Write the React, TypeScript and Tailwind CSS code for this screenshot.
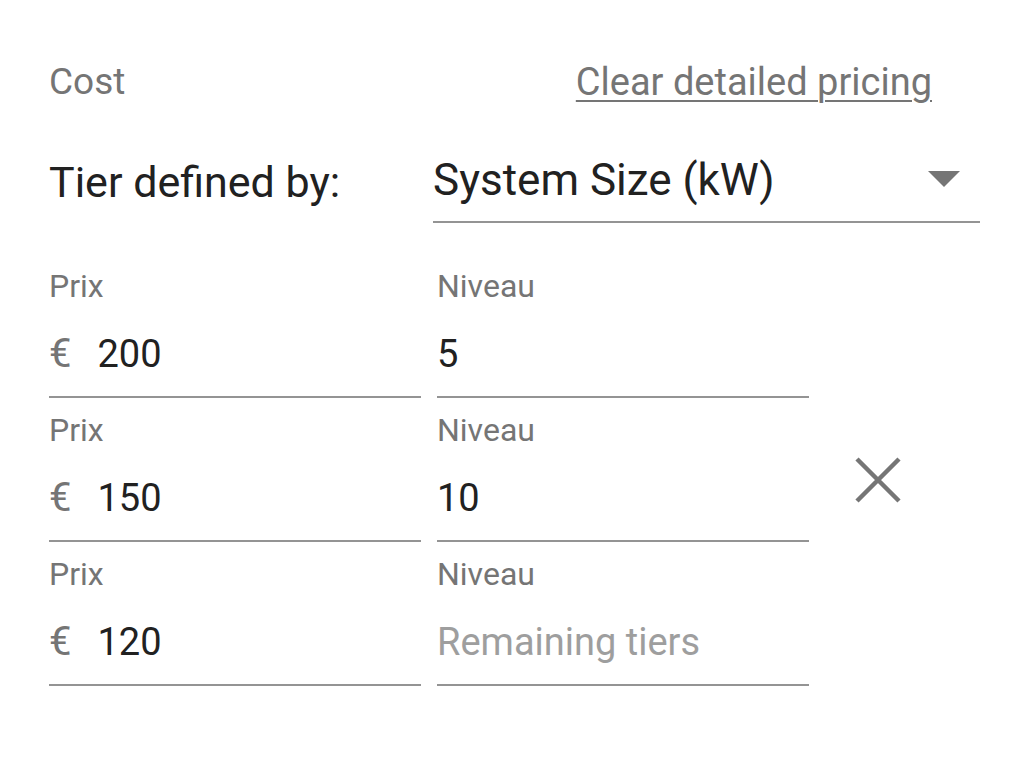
import React from 'react'

const tiers = [
  { price: '200', level: '5' },
  { price: '150', level: '10' },
  { price: '120', level: '' },
]

function Field({ label, prefix, value, placeholder }: { label: string; prefix?: string; value: string; placeholder?: string }) {
  return (
    <div className="flex w-[372px] flex-col border-b-2 border-[#949494] pt-[12px] pb-[18px]">
      <div className="h-[40px] text-[32px] leading-[40px] text-[#757575]">{label}</div>
      <div className="mt-[24px] flex h-[48px] items-center text-[38px] leading-[48px]">
        {prefix && <span className="mr-[26px] text-[40px] text-[#757575]">{prefix}</span>}
        {value ? (
          <span className="text-[#212121]">{value}</span>
        ) : (
          <span className="text-[#9e9e9e]">{placeholder}</span>
        )}
      </div>
    </div>
  )
}

export default function App() {
  return (
    <div className="min-h-screen bg-white pl-[49px] pt-[62px]" style={{ fontFamily: 'Roboto, "Noto Sans", sans-serif' }}>
      {/* Header */}
      <div className="flex h-[40px] w-[883px] items-center justify-between">
        <span className="text-[37px] text-[#757575]">Cost</span>
        <a className="cursor-pointer text-[38px] text-[#757575] underline decoration-2 underline-offset-[5px]">
          Clear detailed pricing
        </a>
      </div>

      {/* Tier select */}
      <div className="mt-[54px] flex items-end">
        <div className="w-[384px] pb-[17px] text-[43px] leading-[48px] text-[#212121]">Tier defined by:</div>
        <div className="flex w-[547px] items-center justify-between border-b-2 border-[#949494] pb-[17px]">
          <span className="h-[48px] text-[44px] leading-[48px] text-[#212121]">System Size (kW)</span>
          <svg width="32" height="16" viewBox="0 0 32 16" className="mr-[20px] mb-[2px]">
            <path d="M0 0 L32 0 L16 16 Z" fill="#757575" />
          </svg>
        </div>
      </div>

      {/* Tiers */}
      <div className="mt-[31px] flex items-center">
        <div className="flex flex-col">
          {tiers.map((t, i) => (
            <div key={i} className="flex gap-[16px]">
              <Field label="Prix" prefix="€" value={t.price} />
              <Field label="Niveau" value={t.level} placeholder="Remaining tiers" />
            </div>
          ))}
        </div>
        <div className="ml-[46px] mt-[20px] flex items-center">
          <svg width="46" height="46" viewBox="0 0 46 46">
            <path d="M2 2 L44 44 M44 2 L2 44" stroke="#757575" strokeWidth="4.5" />
          </svg>
        </div>
      </div>
    </div>
  )
}
